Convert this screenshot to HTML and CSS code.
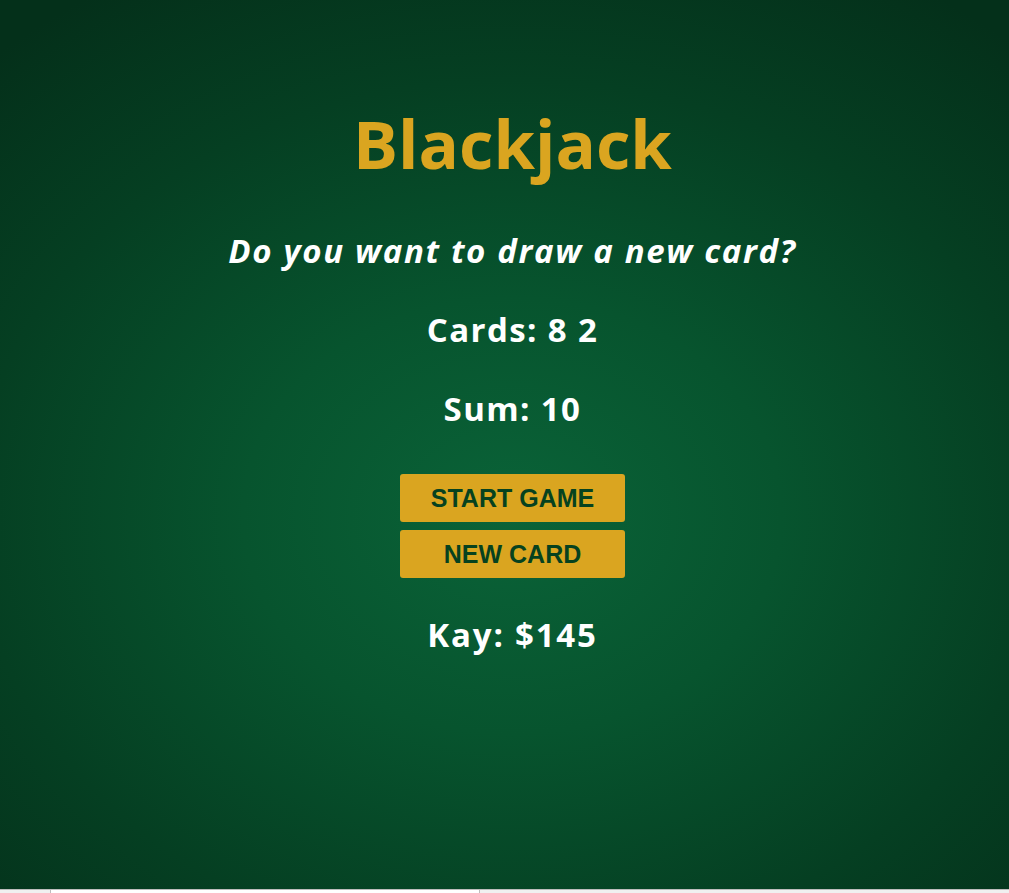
FILE: index.html
```html
<!DOCTYPE html>
<html lang="en">
<head>
<meta charset="utf-8">
<title>Blackjack</title>
<link rel="stylesheet" href="styles.css">
</head>
<body>
<main class="table">
  <h1 class="title">Blackjack</h1>
  <p class="message">Do you want to draw a new card?</p>
  <p class="stat">Cards: 8 2</p>
  <p class="stat">Sum: 10</p>
  <div class="actions">
    <button class="btn">START GAME</button>
    <button class="btn">NEW CARD</button>
  </div>
  <p class="stat player">Kay: $145</p>
</main>
<div class="strip"><div class="strip-box"></div></div>
</body>
</html>
```
FILE: styles.css
```css
html, body {
  margin: 0;
  padding: 0;
}
body {
  background: #f0f0f0;
  font-family: "Open Sans", "DejaVu Sans", sans-serif;
  overflow: hidden;
  width: 1009px;
}
.table {
  width: 1025px;
  height: 889px;
  box-sizing: border-box;
  padding-top: 101px;
  display: flex;
  flex-direction: column;
  align-items: center;
  text-align: center;
  color: #ffffff;
  background: radial-gradient(ellipse 75% 70% at 50% 58%, #0a6338 0%, #07542e 35%, #053f22 70%, #04301a 100%);
}
.title {
  margin: 0;
  color: #daa520;
  font-size: 67px;
  font-weight: 700;
  line-height: 84px;
}
.message {
  margin: 46px 0 0;
  font-size: 33px;
  font-style: italic;
  font-weight: 700;
  line-height: 40px;
  letter-spacing: 1.65px;
}
.stat {
  margin: 39px 0 0;
  font-size: 33px;
  font-weight: 700;
  line-height: 40px;
  letter-spacing: 1.4px;
}
.actions {
  margin-top: 45px;
  display: flex;
  flex-direction: column;
  gap: 8px;
}
.btn {
  width: 225px;
  height: 48px;
  border: none;
  border-radius: 3px;
  background: #daa520;
  color: #06421f;
  font-family: "Liberation Sans", Arial, sans-serif;
  font-size: 25px;
  font-weight: 700;
  padding: 0;
}
.player {
  margin-top: 37px;
  letter-spacing: 1.8px;
}
.strip {
  height: 4px;
  background: #f0f0f0;
  border-top: 1px solid #bdbdbd;
  box-sizing: border-box;
  padding-left: 50px;
}
.strip-box {
  width: 428px;
  height: 3px;
  background: #ffffff;
  border-left: 1px solid #bdbdbd;
  border-right: 1px solid #bdbdbd;
}
```
